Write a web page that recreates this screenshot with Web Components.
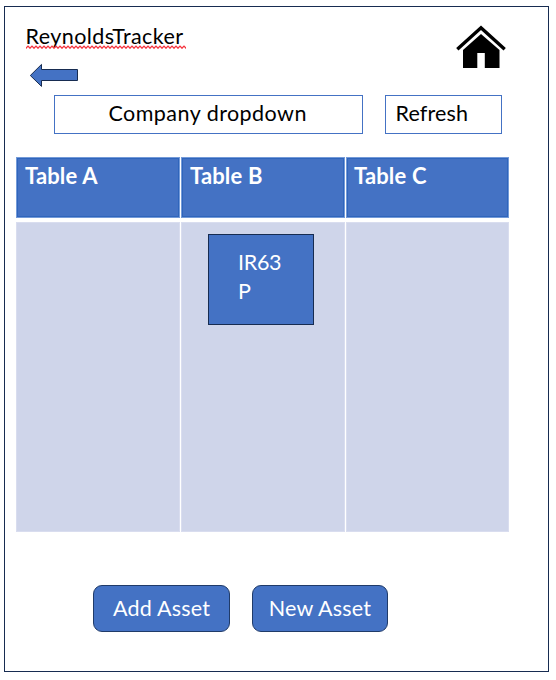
<!DOCTYPE html>
<html lang="en">
<head>
<meta charset="utf-8">
<title>ReynoldsTracker</title>
<style>
body{margin:0;background:#fff;font:21.5px/24px Lato,"Liberation Sans",sans-serif;color:#000}
</style>
</head>
<body>
<tracker-app></tracker-app>
<script>
const define = (name, html) => customElements.define(name, class extends HTMLElement {
  constructor() {
    super();
    this.attachShadow({mode: 'open'}).innerHTML = html;
  }
});

define('tracker-title', `<style>
:host{display:block;width:160px;height:27px;white-space:nowrap;letter-spacing:var(--track,0)}
span{display:block;height:21px}
svg{display:block;overflow:visible}
</style><span><slot></slot></span>
<svg width="160" height="4"><defs><pattern id="w" width="4" height="4" patternUnits="userSpaceOnUse"><path d="M-1 3.9L0 3.2 2 1.2 4 3.2 5 3.9" fill="none" stroke="#f5303a" stroke-width="1.2"/></pattern></defs><rect width="160" height="4" fill="url(#w)"/></svg>`);

define('back-arrow', `<style>:host{display:block;width:50px;height:25px}svg{display:block}</style>
<svg width="50" height="25" viewBox="0 0 50 25"><path d="M1.3 12.5L12.5 1.4V6.5H48.5V17.5H12.5V23.4Z" fill="#4472c4" stroke="#172c51"/></svg>`);

define('home-icon', `<style>:host{display:block;width:52px;height:44px}svg{display:block}</style>
<svg width="52" height="44" viewBox="0 0 52 44"><path d="M2.3 24.3L26 2.8 49.7 24.3" fill="none" stroke="#000" stroke-width="3.4"/><path d="M8 25L26 9 44.5 25V43H29.8V28H22.3V43H8Z"/></svg>`);

define('outline-field', `<style>
:host{display:block;box-sizing:border-box;height:39px;border:1px solid #4472c4;padding-top:5px;white-space:nowrap;letter-spacing:var(--track,0)}
</style><slot></slot>`);

define('asset-card', `<style>
:host{display:block;box-sizing:border-box;width:106px;height:91px;margin:12px 0 0 27px;padding:13px 30px 0 29px;background:#4472c4;border:1px solid #172c51;color:#fff;line-height:29px;overflow-wrap:anywhere;letter-spacing:-.3px}
</style><slot></slot>`);

define('table-column', `<style>
:host{display:grid;grid-template-rows:61px 310px;row-gap:4px}
header{box-sizing:border-box;padding:6px 0 0 var(--inset,8px);background:#4472c4;border:1px solid #749ad8;box-shadow:inset 0 0 0 1px #2f65bc;color:#fff;font-size:22px;font-weight:700;letter-spacing:.15px}
section{background:#cfd5ea;box-shadow:inset 0 0 0 1px #d9ddef;display:flow-root}
</style><header><slot name="title"></slot></header><section><slot></slot></section>`);

define('action-button', `<style>
:host{display:block}
button{box-sizing:border-box;display:block;width:100%;height:47px;margin:0;padding:0 0 2px;border:1px solid #203b69;border-radius:9px;background:#4472c4;color:#fff;font:inherit;letter-spacing:.2px;white-space:nowrap}
</style><button><slot></slot></button>`);

define('tracker-app', `<style>
:host{display:block;padding:6px 0 0 4px}
main{box-sizing:border-box;width:545px;height:666px;border:1px solid #172c51;padding:17px 0 0 11px}
.top{display:flex;justify-content:space-between;height:71px;padding:0 41px 0 9.5px}
.left{display:grid;grid-template-rows:27px 25px;row-gap:12px;align-content:start}
back-arrow{margin-left:3.5px}
.fields{display:grid;grid-template-columns:309px 117px;gap:22px;padding-left:38px}
.table{display:grid;grid-template-columns:164px 164px 163px;gap:1px;margin-top:23px}
.actions{display:grid;grid-template-columns:137px 136px;gap:22px;padding-left:77px;margin-top:53px}
home-icon{margin-top:1px}
</style>
<main>
<div class="top"><div class="left"><tracker-title style="--track:.44px">ReynoldsTracker</tracker-title><back-arrow></back-arrow></div><home-icon></home-icon></div>
<div class="fields"><outline-field style="padding-left:53.5px;--track:.45px">Company dropdown</outline-field><outline-field style="padding-left:9.5px;--track:.15px">Refresh</outline-field></div>
<div class="table">
<table-column><span slot="title">Table A</span></table-column>
<table-column><span slot="title">Table B</span><asset-card>IR63P</asset-card></table-column>
<table-column style="--inset:7px"><span slot="title">Table C</span></table-column>
</div>
<div class="actions"><action-button>Add Asset</action-button><action-button>New Asset</action-button></div>
</main>`);
</script>
</body>
</html>
